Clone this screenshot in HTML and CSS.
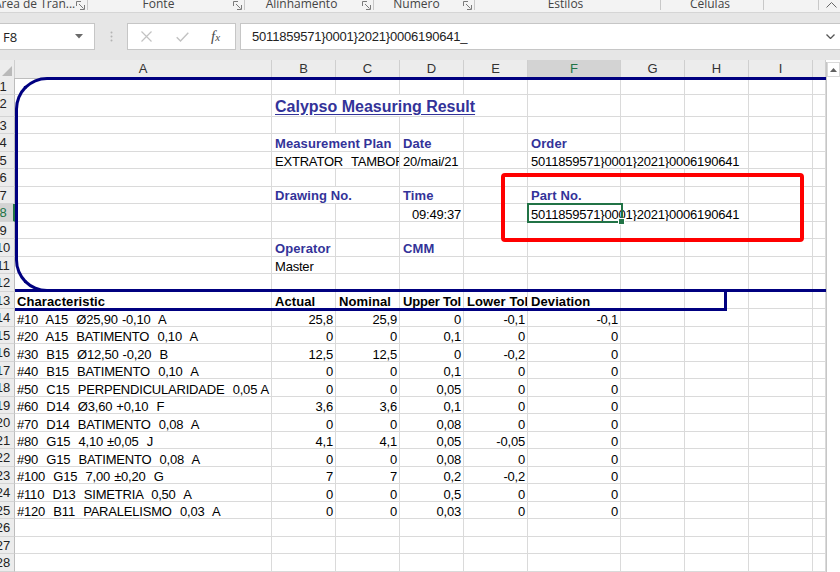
FILE: index.html
```html
<!DOCTYPE html>
<html>
<head>
<meta charset="utf-8">
<title>Calypso Measuring Result</title>
<link rel="stylesheet" href="styles.css">
</head>
<body>
<div class="ribbon">
  <div class="grp g1"><span class="lbl left">Área de Tran...</span><svg class="dl" width="9" height="9" viewBox="0 0 9 9"><path d="M0.5 5V0.5H5M3 3l4.5 4.5M4 8.5h4.5V4" fill="none" stroke="#7a7a7a"/></svg></div><i class="vsep"></i>
  <div class="grp g2"><span class="lbl">Fonte</span><svg class="dl" width="9" height="9" viewBox="0 0 9 9"><path d="M0.5 5V0.5H5M3 3l4.5 4.5M4 8.5h4.5V4" fill="none" stroke="#7a7a7a"/></svg></div><i class="vsep"></i>
  <div class="grp g3"><span class="lbl">Alinhamento</span><svg class="dl" width="9" height="9" viewBox="0 0 9 9"><path d="M0.5 5V0.5H5M3 3l4.5 4.5M4 8.5h4.5V4" fill="none" stroke="#7a7a7a"/></svg></div><i class="vsep"></i>
  <div class="grp g4"><span class="lbl">Número</span><svg class="dl" width="9" height="9" viewBox="0 0 9 9"><path d="M0.5 5V0.5H5M3 3l4.5 4.5M4 8.5h4.5V4" fill="none" stroke="#7a7a7a"/></svg></div><i class="vsep"></i>
  <div class="grp g5"><span class="lbl">Estilos</span></div><i class="vsep"></i>
  <div class="grp g6"><span class="lbl">Células</span></div><i class="vsep"></i>
  <div class="grp g7"></div><i class="vsep"></i>
  <div class="collapse"><svg width="11" height="6" viewBox="0 0 11 6"><path d="M0.5 5.5l5-5 5 5" fill="none" stroke="#666" stroke-width="1"/></svg></div>
</div>

<div class="fbar">
  <div class="namebox"><span>F8</span><svg width="8" height="5" viewBox="0 0 8 5"><path d="M0 0h8L4 4.5z" fill="#6a6a6a"/></svg></div>
  <div class="grip"><svg width="3" height="11" viewBox="0 0 3 11"><circle cx="1.5" cy="1.5" r="1" fill="#b3b3b3"/><circle cx="1.5" cy="5.5" r="1" fill="#b3b3b3"/><circle cx="1.5" cy="9.5" r="1" fill="#b3b3b3"/></svg></div>
  <div class="fxbox">
    <svg width="11" height="11" viewBox="0 0 11 11"><path d="M0.5 0.5l10 10M10.5 0.5l-10 10" stroke="#c2c2c2" stroke-width="1.2"/></svg>
    <svg width="13" height="10" viewBox="0 0 13 10"><path d="M0.7 5.2l3.8 3.8L12.3 0.8" fill="none" stroke="#c2c2c2" stroke-width="1.4"/></svg>
    <span class="fx">f<span class="fxx">x</span></span>
  </div>
  <div class="formula"><span>5011859571}0001}2021}0006190641_</span><svg class="chev" width="9" height="5" viewBox="0 0 9 5"><path d="M0.5 0.5l4 4 4-4" fill="none" stroke="#555" stroke-width="1.3"/></svg></div>
</div>

<div class="sheetwrap">
  <div class="grid">
    <div class="row hdr">
      <div class="corner"><svg width="10" height="10" viewBox="0 0 10 10"><path d="M10 0V10H0z" fill="#b9b9b9"/></svg></div>
      <div>A</div><div>B</div><div>C</div><div>D</div><div>E</div><div class="on">F</div><div>G</div><div>H</div><div>I</div><div></div>
    </div>

    <div class="row h17"><div class="rh"><span>1</span></div><i></i><i></i><i></i><i></i><i></i><i></i><i></i><i></i><i></i><i></i></div>
    <div class="row h22"><div class="rh"><span>2</span></div><i></i><i class="s4 title">Calypso Measuring Result</i><i></i><i></i><i></i><i></i><i></i></div>
    <div class="row h17"><div class="rh"><span>3</span></div><i></i><i></i><i></i><i></i><i></i><i></i><i></i><i></i><i></i><i></i></div>
    <div class="row h18"><div class="rh"><span>4</span></div><i></i><i class="s2 lbl">Measurement Plan</i><i class="lbl">Date</i><i></i><i class="lbl">Order</i><i></i><i></i><i></i><i></i></div>
    <div class="row h17"><div class="rh"><span>5</span></div><i></i><i class="s2 a">EXTRATOR  TAMBOR</i><i>20/mai/21</i><i></i><i class="s3">5011859571}0001}2021}0006190641</i><i></i><i></i></div>
    <div class="row h18"><div class="rh"><span>6</span></div><i></i><i></i><i></i><i></i><i></i><i></i><i></i><i></i><i></i><i></i></div>
    <div class="row h17"><div class="rh"><span>7</span></div><i></i><i class="s2 lbl">Drawing No.</i><i class="lbl">Time</i><i></i><i class="lbl">Part No.</i><i></i><i></i><i></i><i></i></div>
    <div class="row h18"><div class="rh sel"><span>8</span></div><i></i><i></i><i></i><i class="n">09:49:37</i><i></i><i class="s3">5011859571}0001}2021}0006190641</i><i></i><i></i></div>
    <div class="row h17"><div class="rh"><span>9</span></div><i></i><i></i><i></i><i></i><i></i><i></i><i></i><i></i><i></i><i></i></div>
    <div class="row h18"><div class="rh"><span>10</span></div><i></i><i class="lbl">Operator</i><i></i><i class="lbl">CMM</i><i></i><i></i><i></i><i></i><i></i><i></i></div>
    <div class="row h17"><div class="rh"><span>11</span></div><i></i><i>Master</i><i></i><i></i><i></i><i></i><i></i><i></i><i></i><i></i></div>
    <div class="row h18"><div class="rh"><span>12</span></div><i></i><i></i><i></i><i></i><i></i><i></i><i></i><i></i><i></i><i></i></div>
    <div class="row h17"><div class="rh"><span>13</span></div><i class="th c1">Characteristic</i><i class="th">Actual</i><i class="th">Nominal</i><i class="th tight">Upper Tol</i><i class="th">Lower Tol</i><i class="th">Deviation</i><i></i><i></i><i></i><i></i></div>
    <div class="row h18"><div class="rh"><span>14</span></div><i class="a c1">#10  A15  Ø25,90 -0,10  A</i><i class="n">25,8</i><i class="n">25,9</i><i class="n">0</i><i class="n">-0,1</i><i class="n">-0,1</i><i></i><i></i><i></i><i></i></div>
    <div class="row h17"><div class="rh"><span>15</span></div><i class="a c1">#20  A15  BATIMENTO  0,10  A</i><i class="n">0</i><i class="n">0</i><i class="n">0,1</i><i class="n">0</i><i class="n">0</i><i></i><i></i><i></i><i></i></div>
    <div class="row h18"><div class="rh"><span>16</span></div><i class="a c1">#30  B15  Ø12,50 -0,20  B</i><i class="n">12,5</i><i class="n">12,5</i><i class="n">0</i><i class="n">-0,2</i><i class="n">0</i><i></i><i></i><i></i><i></i></div>
    <div class="row h17"><div class="rh"><span>17</span></div><i class="a c1">#40  B15  BATIMENTO  0,10  A</i><i class="n">0</i><i class="n">0</i><i class="n">0,1</i><i class="n">0</i><i class="n">0</i><i></i><i></i><i></i><i></i></div>
    <div class="row h18"><div class="rh"><span>18</span></div><i class="a c1">#50  C15  PERPENDICULARIDADE  0,05 A</i><i class="n">0</i><i class="n">0</i><i class="n">0,05</i><i class="n">0</i><i class="n">0</i><i></i><i></i><i></i><i></i></div>
    <div class="row h17"><div class="rh"><span>19</span></div><i class="a c1">#60  D14  Ø3,60 +0,10  F</i><i class="n">3,6</i><i class="n">3,6</i><i class="n">0,1</i><i class="n">0</i><i class="n">0</i><i></i><i></i><i></i><i></i></div>
    <div class="row h18"><div class="rh"><span>20</span></div><i class="a c1">#70  D14  BATIMENTO  0,08  A</i><i class="n">0</i><i class="n">0</i><i class="n">0,08</i><i class="n">0</i><i class="n">0</i><i></i><i></i><i></i><i></i></div>
    <div class="row h17"><div class="rh"><span>21</span></div><i class="a c1">#80  G15  4,10 ±0,05  J</i><i class="n">4,1</i><i class="n">4,1</i><i class="n">0,05</i><i class="n">-0,05</i><i class="n">0</i><i></i><i></i><i></i><i></i></div>
    <div class="row h18"><div class="rh"><span>22</span></div><i class="a c1">#90  G15  BATIMENTO  0,08  A</i><i class="n">0</i><i class="n">0</i><i class="n">0,08</i><i class="n">0</i><i class="n">0</i><i></i><i></i><i></i><i></i></div>
    <div class="row h17"><div class="rh"><span>23</span></div><i class="a c1">#100  G15  7,00 ±0,20  G</i><i class="n">7</i><i class="n">7</i><i class="n">0,2</i><i class="n">-0,2</i><i class="n">0</i><i></i><i></i><i></i><i></i></div>
    <div class="row h18"><div class="rh"><span>24</span></div><i class="a c1">#110  D13  SIMETRIA  0,50  A</i><i class="n">0</i><i class="n">0</i><i class="n">0,5</i><i class="n">0</i><i class="n">0</i><i></i><i></i><i></i><i></i></div>
    <div class="row h17"><div class="rh"><span>25</span></div><i class="a c1">#120  B11  PARALELISMO  0,03  A</i><i class="n">0</i><i class="n">0</i><i class="n">0,03</i><i class="n">0</i><i class="n">0</i><i></i><i></i><i></i><i></i></div>
    <div class="row h18"><div class="rh"><span>26</span></div><i></i><i></i><i></i><i></i><i></i><i></i><i></i><i></i><i></i><i></i></div>
    <div class="row h17"><div class="rh"><span>27</span></div><i></i><i></i><i></i><i></i><i></i><i></i><i></i><i></i><i></i><i></i></div>
    <div class="row h18"><div class="rh"><span>28</span></div><i></i><i></i><i></i><i></i><i></i><i></i><i></i><i></i><i></i><i></i></div>

    <div class="frame"></div>
    <div class="hbox"></div>
    <div class="redbox"></div>
    <div class="selbox"></div>
    <div class="handle"></div>
  </div>
  <div class="vscroll">
    <div class="sbtn"><svg width="7" height="4" viewBox="0 0 7 4"><path d="M0 4L3.5 0 7 4z" fill="#606060"/></svg></div>
  </div>
</div>
</body>
</html>
```

FILE: styles.css
```css
* { box-sizing: border-box; }

body {
  margin: 0;
  width: 840px;
  height: 572px;
  overflow: hidden;
  background: #ffffff;
  font-family: "Liberation Sans", Arial, sans-serif;
}

/* ---------- ribbon group labels ---------- */
.ribbon {
  height: 13px;
  background: #f3f3f3;
  border-bottom: 1px solid #d5d5d5;
  display: flex;
  align-items: flex-start;
  overflow: hidden;
  font-family: "Open Sans", "Noto Sans", sans-serif;
  font-size: 12px;
  color: #444444;
}
.grp {
  display: flex;
  align-items: flex-start;
  height: 12px;
}
.grp .lbl {
  flex: 1;
  text-align: center;
  line-height: 12px;
  margin-top: -2px;
  padding-right: 4px;
  white-space: nowrap;
}
.grp .lbl.left { text-align: left; margin-left: -6px; padding-right: 0; }
.grp .dl { margin: 1px 2px 0 0; flex: none; }
.g1 { width: 87px; }
.g2 { width: 156px; }
.g3 { width: 128px; }
.g4 { width: 100px; }
.g5 { width: 185px; }
.g6 { width: 102px; }
.g7 { width: 54px; }
.vsep {
  width: 1px;
  height: 10px;
  background: #c8c8c8;
  flex: none;
}
.collapse {
  flex: 1;
  display: flex;
  justify-content: flex-end;
  padding: 2px 3px 0 0;
}

/* ---------- formula bar ---------- */
.fbar {
  height: 47px;
  background: #e6e6e6;
  padding: 10px 0;
  display: flex;
}
.namebox {
  width: 95px;
  background: #fff;
  border: 1px solid #c6c6c6;
  border-left: none;
  display: flex;
  align-items: center;
  justify-content: space-between;
  padding: 0 11px 0 3px;
  font-family: "Open Sans", "Noto Sans", sans-serif;
  font-size: 13px;
  color: #222;
}
.grip {
  width: 32px;
  display: flex;
  align-items: center;
  justify-content: center;
}
.fxbox {
  width: 109px;
  background: #fff;
  border: 1px solid #c6c6c6;
  display: flex;
  align-items: center;
  padding-left: 13px;
  gap: 24px;
}
.fx {
  font-family: "Liberation Serif", "DejaVu Serif", serif;
  font-style: italic;
  font-size: 15px;
  color: #4a4a4a;
  margin-left: -2px;
}
.fxx { font-size: 11px; }
.formula {
  flex: 1;
  margin-left: 4px;
  background: #fff;
  border: 1px solid #c6c6c6;
  border-right: none;
  display: flex;
  align-items: center;
  justify-content: space-between;
  padding: 0 5px 0 11px;
  font-size: 13px;
  letter-spacing: -0.2px;
  color: #222;
}

/* ---------- sheet ---------- */
.sheetwrap {
  display: flex;
  height: 512px;
}
.grid {
  position: relative;
  width: 826px;
  overflow: hidden;
}
.row {
  display: grid;
  grid-template-columns: 15px 257px 64px 64px 64px 64px 93px 64px 64px 64px 13px;
}
.h17 { height: 17px; }
.h18 { height: 18px; }
.h22 { height: 22px; }

.row > i {
  font-style: normal;
  border-right: 1px solid #dadada;
  border-bottom: 1px solid #dadada;
  display: flex;
  align-items: flex-end;
  padding: 0 2px 0 3px;
  overflow: hidden;
  white-space: pre;
  font-size: 13px;
  line-height: 13px;
  letter-spacing: -0.2px;
  color: #000;
}
.row > i.c1 { padding-left: 2px; }
.row > i.a { word-spacing: 0.7px; }
.row > i.n { justify-content: flex-end; }
.s2 { grid-column: span 2; }
.s3 { grid-column: span 3; }
.s4 { grid-column: span 4; }

.row > i.title {
  font-size: 16px;
  line-height: 16px;
  font-weight: bold;
  letter-spacing: 0;
  color: #333399;
  text-decoration: underline;
  text-underline-offset: 2px;
  padding-bottom: 1px;
}
.row > i.lbl {
  font-weight: bold;
  color: #333399;
  letter-spacing: 0.1px;
  padding-bottom: 1px;
}
.row > i.th {
  font-weight: bold;
  letter-spacing: 0.1px;
}
.row > i.th.tight {
  letter-spacing: -0.2px;
  padding-right: 0;
}

/* headers */
.row.hdr { height: 18px; }
.row.hdr > div {
  background: #ececec;
  border-right: 1px solid #cfcfcf;
  border-bottom: 1px solid #bdbdbd;
  text-align: center;
  font-size: 13px;
  line-height: 17px;
  color: #333;
}
.row.hdr > div.on {
  background: #d3d3d3;
  color: #217346;
  border-bottom: 2px solid #217346;
}
.row.hdr > .corner {
  display: flex;
  align-items: flex-end;
  justify-content: flex-end;
  padding: 0 2px 2px 0;
}
.rh {
  background: #ececec;
  border-right: 1px solid #bdbdbd;
  border-bottom: 1px solid #d4d4d4;
  overflow: hidden;
}
.rh span {
  display: block;
  width: 24px;
  margin-left: -9px;
  text-align: center;
  font-size: 13px;
  line-height: 17px;
  color: #222;
}
.rh.sel {
  background: #d3d3d3;
  border-right: 2px solid #217346;
}
.rh.sel span { color: #217346; }

/* overlays drawn over the cells */
.frame {
  position: absolute;
  left: 15px;
  top: 17px;
  width: 811px;
  height: 215px;
  border: 3px solid #000080;
  border-right: none;
  border-radius: 32px 0 0 32px;
}
.hbox {
  position: absolute;
  left: 15px;
  top: 229px;
  width: 712px;
  height: 22px;
  border: 3px solid #000080;
  border-left: none;
}
.redbox {
  position: absolute;
  left: 501px;
  top: 113px;
  width: 303px;
  height: 69px;
  border: 4px solid #ff0000;
  border-radius: 4px;
}
.selbox {
  position: absolute;
  left: 527px;
  top: 143px;
  width: 96px;
  height: 20px;
  border: 2px solid #217346;
}
.handle {
  position: absolute;
  left: 618px;
  top: 158px;
  width: 7px;
  height: 7px;
  background: #217346;
  border: 1px solid #fff;
}

/* vertical scrollbar */
.vscroll {
  width: 14px;
  margin-top: 2px;
  background: #ffffff;
  border-left: 1px solid #c6c6c6;
}
.sbtn {
  height: 15px;
  border: 1px solid #d9d9d9;
  display: flex;
  align-items: center;
  justify-content: center;
}
```
